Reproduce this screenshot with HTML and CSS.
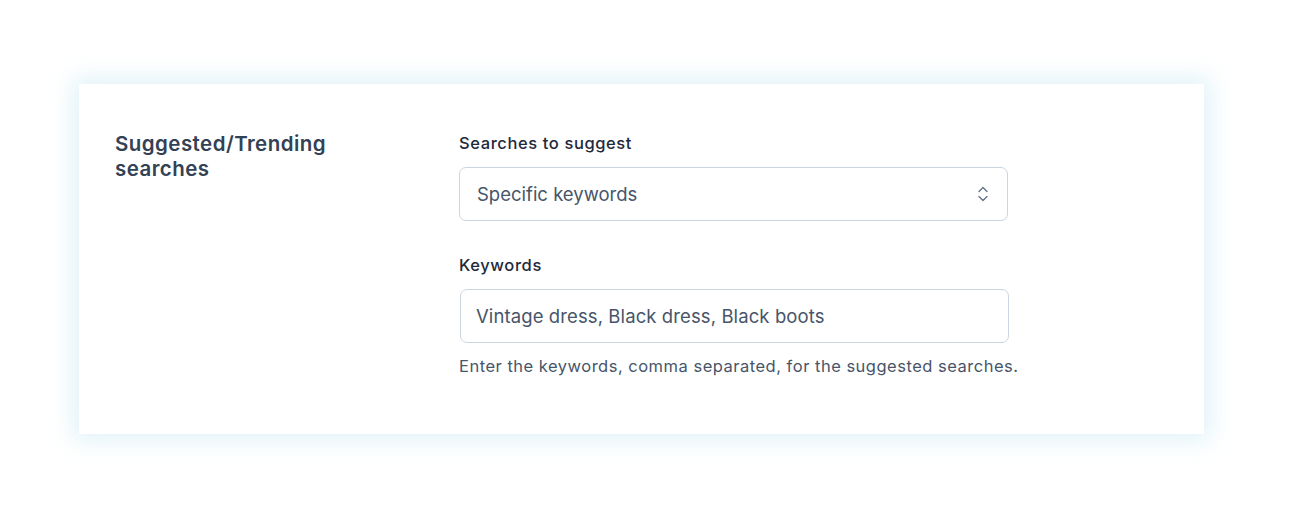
FILE: index.html
```html
<!DOCTYPE html>
<html>
<head>
<meta charset="utf-8">
<link rel="stylesheet" href="styles.css">
</head>
<body>
<div class="page">
  <section class="card">
    <h2 class="section-title">Suggested/Trending searches</h2>
    <div class="fields">
      <div class="field">
        <label class="label">Searches to suggest</label>
        <div class="select">
          <span class="select-value">Specific keywords</span>
          <svg class="chevrons" width="12" height="20" viewBox="0 0 12 20" fill="none" stroke="#64748b" stroke-width="1.4" stroke-linecap="round" stroke-linejoin="round">
            <path d="M2 7.5 L6 3.5 L10 7.5"/>
            <path d="M2 12.5 L6 16.5 L10 12.5"/>
          </svg>
        </div>
      </div>
      <div class="field">
        <label class="label">Keywords</label>
        <div class="input">Vintage dress, Black dress, Black boots</div>
        <p class="help">Enter the keywords, comma separated, for the suggested searches.</p>
      </div>
    </div>
  </section>
</div>
</body>
</html>
```
FILE: styles.css
```css
* { box-sizing: border-box; }
html, body {
  margin: 0;
  padding: 0;
  background: #ffffff;
  font-family: Inter, "Noto Sans", "Liberation Sans", sans-serif;
}
.page {
  width: 1300px;
  height: 520px;
  padding: 84px 0 0 79px;
}
.card {
  width: 1125px;
  height: 350px;
  background: #ffffff;
  box-shadow: 0 0 22px 6px rgba(186, 226, 240, 0.45);
  display: grid;
  grid-template-columns: 344px 1fr;
  padding: 47px 36px 0 36px;
}
.section-title {
  margin: 0;
  font-size: 20.5px;
  line-height: 25px;
  font-weight: 600;
  color: #334155;
  width: 240px;
  letter-spacing: 0.45px;
}
.fields {
  display: flex;
  flex-direction: column;
  gap: 33px;
  padding-top: 1px;
}
.field {
  display: flex;
  flex-direction: column;
}
.label {
  font-size: 16.5px;
  line-height: 22px;
  font-weight: 500;
  color: #1e293b;
  letter-spacing: 0.6px;
  margin-bottom: 13px;
}
.select, .input {
  width: 549px;
  height: 54px;
  border: 1px solid #cbd5e1;
  border-radius: 7px;
  display: flex;
  align-items: center;
  font-size: 18.5px;
  color: #475569;
  background: #fff;
}
.select {
  justify-content: space-between;
  padding: 0 18px 0 17px;
}
.input {
  padding: 0 15px;
  margin-left: 1px;
  letter-spacing: 0.1px;
}
.chevrons { display: block; }
.help {
  margin: 12px 0 0 0;
  font-size: 16.5px;
  line-height: 22px;
  color: #475569;
  letter-spacing: 0.5px;
}
```
